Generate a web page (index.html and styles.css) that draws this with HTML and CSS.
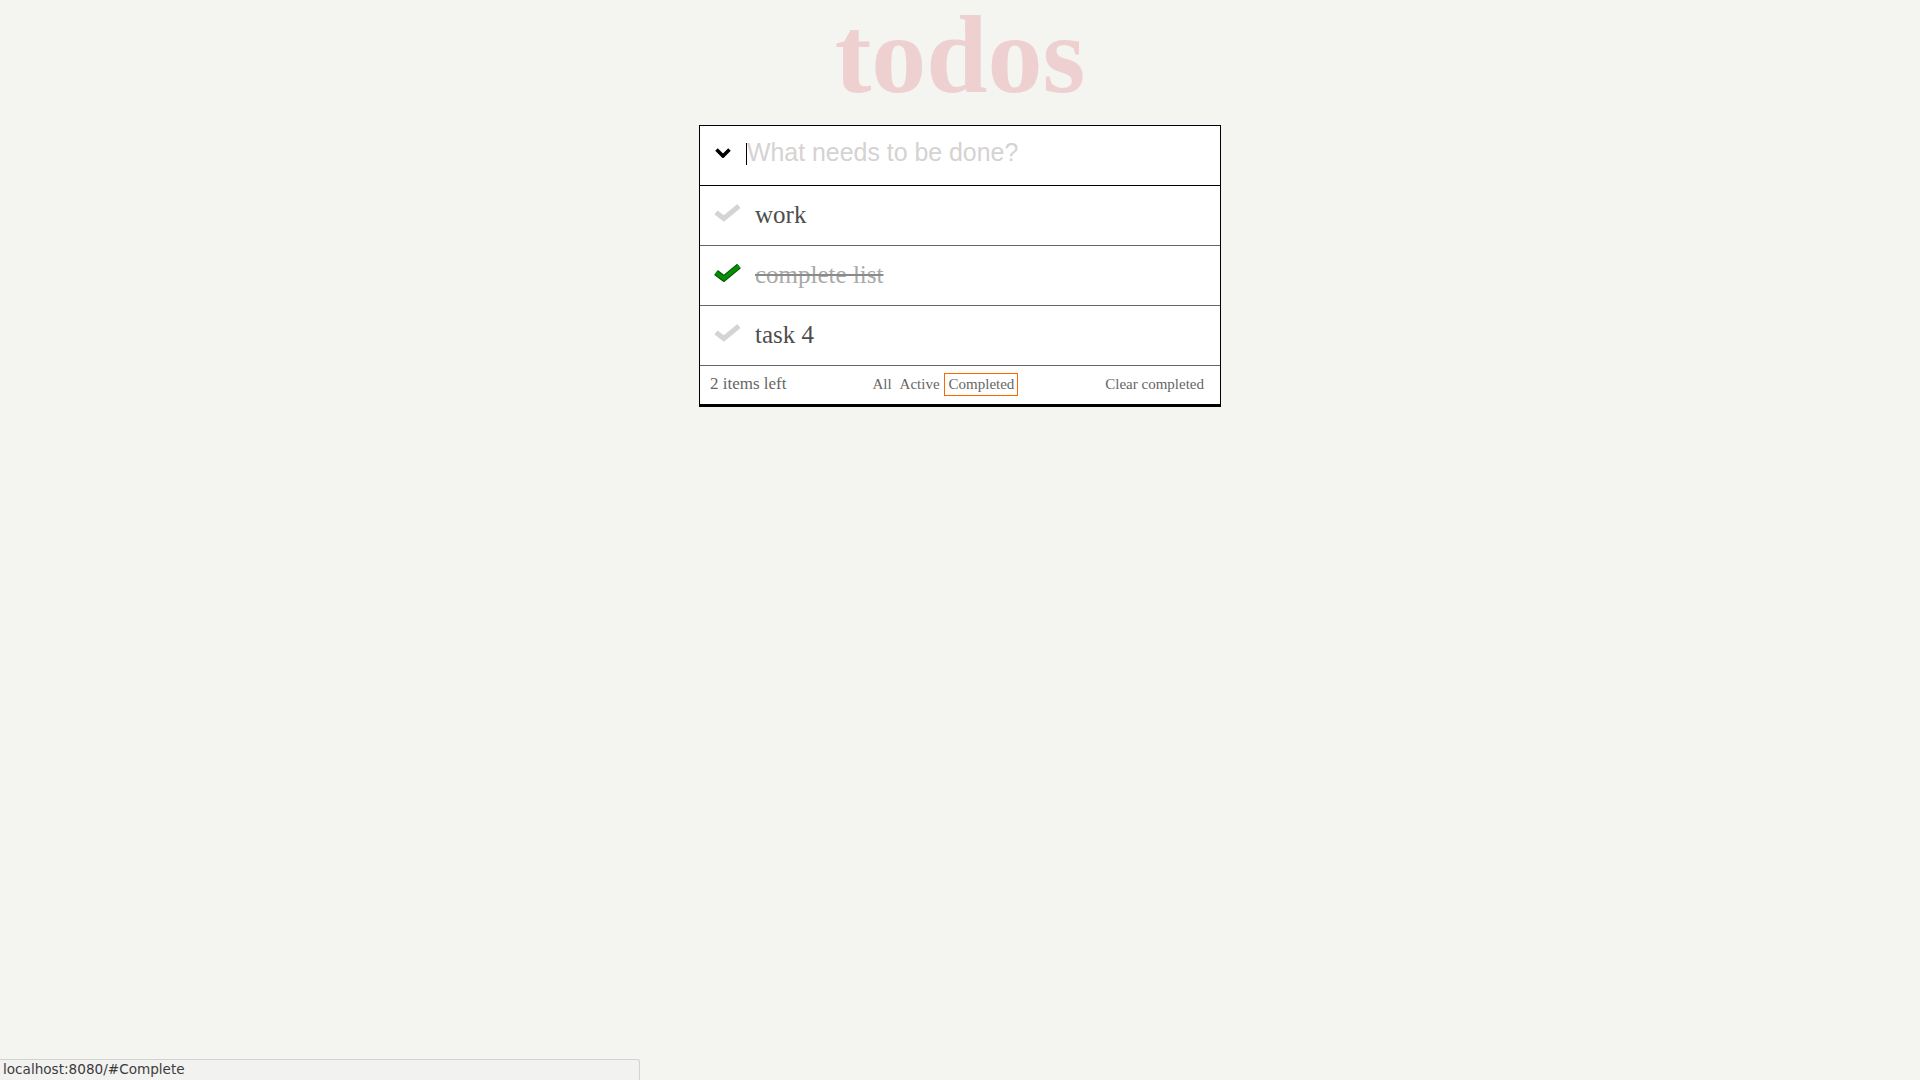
FILE: index.html
```html
<!DOCTYPE html>
<html lang="en">
<head>
<meta charset="utf-8">
<title>todos</title>
<link rel="stylesheet" href="styles.css">
</head>
<body>
<main class="app">
  <h1 class="title">todos</h1>
  <section class="todoapp">
    <header class="new-row">
      <svg class="toggle-all" width="16" height="10" viewBox="0 0 16 10" aria-hidden="true">
        <polyline points="1.5,1.5 8,8 14.5,1.5" fill="none" stroke="#000" stroke-width="3.6" stroke-linejoin="miter"/>
      </svg>
      <span class="caret"></span>
      <input class="new-todo" type="text" placeholder="What needs to be done?">
    </header>
    <ul class="todo-list">
      <li class="todo">
        <svg class="check" width="27" height="19" viewBox="0 0 27 19" aria-hidden="true">
          <polyline points="2,9.5 9.8,15.5 25,3" fill="none" stroke="#d4d4d4" stroke-width="5"/>
        </svg>
        <span class="label">work</span>
      </li>
      <li class="todo done">
        <svg class="check" width="27" height="19" viewBox="0 0 27 19" aria-hidden="true">
          <polyline points="2,9.5 9.8,15.5 25,3" fill="none" stroke="#0b4f0b" stroke-width="6"/>
          <polyline points="2,9.5 9.8,15.5 25,3" fill="none" stroke="#029102" stroke-width="4"/>
        </svg>
        <span class="label">complete list</span>
      </li>
      <li class="todo">
        <svg class="check" width="27" height="19" viewBox="0 0 27 19" aria-hidden="true">
          <polyline points="2,9.5 9.8,15.5 25,3" fill="none" stroke="#d4d4d4" stroke-width="5"/>
        </svg>
        <span class="label">task 4</span>
      </li>
    </ul>
    <footer class="footer">
      <span class="count">2 items left</span>
      <nav class="filters">
        <a class="filter" href="#All">All</a>
        <a class="filter" href="#Active">Active</a>
        <a class="filter selected" href="#Complete">Completed</a>
      </nav>
      <a class="clear" href="#">Clear completed</a>
    </footer>
  </section>
</main>
<div class="status">localhost:8080/#Complete</div>
</body>
</html>
```
FILE: styles.css
```css
html, body {
  margin: 0;
  padding: 0;
}
body {
  background: #f4f4f0;
  min-height: 100vh;
  font-family: "Liberation Serif", "Times New Roman", serif;
}
.app {
  display: flex;
  flex-direction: column;
  align-items: center;
}
.title {
  margin: 0 0 15px;
  font-family: "Liberation Serif", "Times New Roman", serif;
  font-weight: bold;
  font-size: 110px;
  line-height: 110px;
  color: #efd0d1;
}
.todoapp {
  width: 520px;
  background: #fff;
  border: 1px solid #000;
  border-bottom-width: 3px;
}
.new-row {
  display: flex;
  align-items: center;
  height: 59px;
  padding-left: 15px;
  border-bottom: 1px solid #000;
}
.toggle-all {
  display: block;
  margin-top: -5px;
  flex: none;
}
.caret {
  display: block;
  width: 1px;
  height: 22px;
  background: #000;
  margin-left: 15px;
  margin-right: 1px;
  margin-top: -3px;
  flex: none;
}
.new-todo {
  flex: 1;
  border: 0;
  padding: 0;
  margin: -6px 0 0 -1px;
  height: 30px;
  outline: none;
  background: transparent;
  font-family: "Liberation Sans", Arial, sans-serif;
  font-size: 24.9px;
  color: #4d4d4d;
}
.new-todo::placeholder {
  color: #d5d2d2;
}
.todo-list {
  list-style: none;
  margin: 0;
  padding: 0;
}
.todo {
  display: flex;
  align-items: center;
  height: 59px;
  padding-left: 14px;
  border-bottom: 1px solid #666;
}
.check {
  display: block;
  flex: none;
  margin-top: -7px;
}
.label {
  margin-left: 14px;
  margin-top: -2px;
  font-size: 25px;
  color: #4d4d4d;
}
.done .label {
  color: #a9a9a9;
  text-decoration: line-through;
  text-decoration-color: #8a8a8a;
}
.footer {
  display: flex;
  align-items: center;
  justify-content: space-between;
  height: 38px;
  padding: 0 16px 0 10px;
  font-size: 15px;
  color: #666;
}
.count {
  font-size: 17px;
  margin-top: -2px;
}
.filters {
  display: flex;
  align-items: center;
  margin-right: 5px;
  margin-top: -1px;
}
.filter {
  padding: 2px 3px;
  border: 1px solid transparent;
  color: #666;
  text-decoration: none;
}
.filter.selected {
  border-color: #f60;
  padding: 2px 3px 2px 4px;
}
.clear {
  color: #666;
  text-decoration: none;
  margin-top: -1px;
}
.status {
  position: fixed;
  left: 0;
  bottom: 0;
  width: 636px;
  height: 20px;
  padding-left: 3px;
  background: #f2f2f0;
  border-top: 1px solid #d2d2d0;
  border-right: 1px solid #d2d2d0;
  border-top-right-radius: 3px;
  font-family: "DejaVu Sans", "Noto Sans", sans-serif;
  font-size: 13.6px;
  line-height: 18px;
  color: #3c3c3c;
}
```
